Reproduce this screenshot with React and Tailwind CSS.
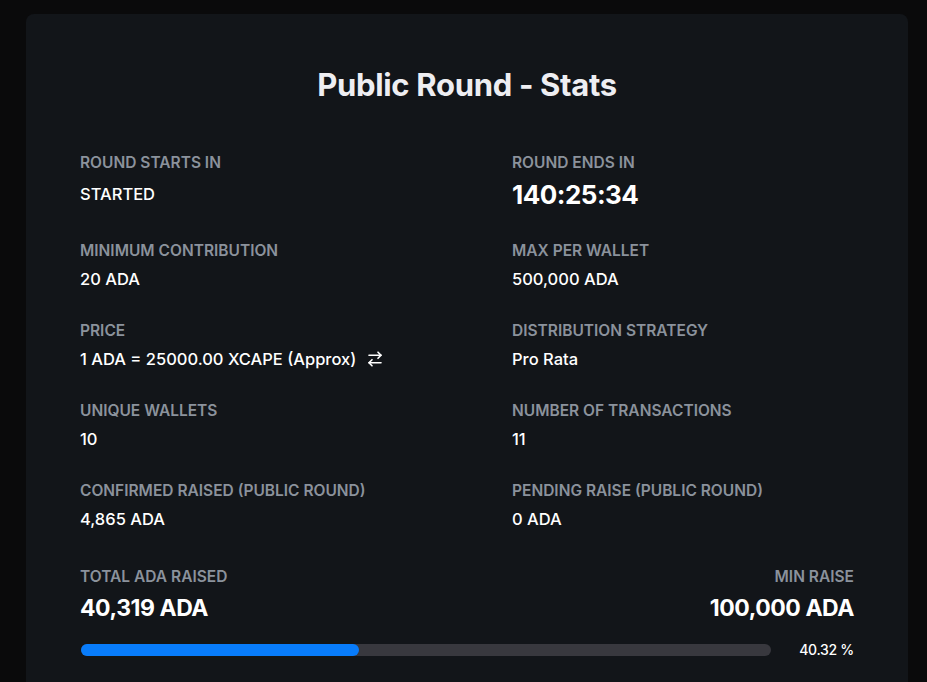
import React from 'react';
import { ArrowRightLeft } from 'lucide-react';

const Label = ({ children, className = '' }) => (
  <div className={`text-[15.5px] leading-5 font-semibold uppercase text-[#8b929c] ${className}`}>{children}</div>
);

const Value = ({ children, className = '' }) => (
  <div className={`mt-2 text-[16.5px] leading-5 font-medium text-white ${className}`}>{children}</div>
);

const rows = [
  ['MINIMUM CONTRIBUTION', '20 ADA', 'MAX PER WALLET', '500,000 ADA'],
  ['PRICE', 'price', 'DISTRIBUTION STRATEGY', 'Pro Rata'],
  ['UNIQUE WALLETS', '10', 'NUMBER OF TRANSACTIONS', '11'],
  ['CONFIRMED RAISED (PUBLIC ROUND)', '4,865 ADA', 'PENDING RAISE (PUBLIC ROUND)', '0 ADA'],
];

export default function App() {
  const pct = 40.32;
  return (
    <div className="min-h-[682px] bg-[#0a0a0b] pt-[14px] pl-[26px] pr-[19px]" style={{ fontFamily: 'Inter, "Liberation Sans", sans-serif' }}>
      <div className="min-h-[700px] rounded-lg bg-[#121519] px-[54px] pt-[53px]">
        <h1 className="text-center text-[31px] leading-9 font-bold tracking-[-0.01em] text-[#eeeef2]">
          Public Round - Stats
        </h1>

        <div className="mt-[50px] grid grid-cols-2 gap-x-[90px] gap-y-8">
          {/* first row: timer is bigger */}
          <div>
            <Label>ROUND STARTS IN</Label>
            <Value className="mt-[11px]">STARTED</Value>
          </div>
          <div>
            <Label>ROUND ENDS IN</Label>
            <div className="mt-2 text-[26px] leading-7 font-bold tracking-[-0.02em] text-white">140:25:34</div>
          </div>

          {rows.map(([l1, v1, l2, v2]) => (
            <React.Fragment key={l1}>
              <div>
                <Label>{l1}</Label>
                {v1 === 'price' ? (
                  <Value className="flex items-center gap-2.5">
                    1 ADA = 25000.00 XCAPE (Approx)
                    <ArrowRightLeft className="w-[18px] h-[18px] text-white" strokeWidth={2.2} />
                  </Value>
                ) : (
                  <Value>{v1}</Value>
                )}
              </div>
              <div>
                <Label>{l2}</Label>
                <Value>{v2}</Value>
              </div>
            </React.Fragment>
          ))}
        </div>

        {/* total raised */}
        <div className="mt-[38px] flex justify-between">
          <div>
            <Label>TOTAL ADA RAISED</Label>
            <div className="mt-1.5 text-[23px] leading-[30px] font-bold tracking-[-0.02em] text-white">40,319 ADA</div>
          </div>
          <div className="text-right">
            <Label>MIN RAISE</Label>
            <div className="mt-1.5 text-[23px] leading-[30px] font-bold tracking-[-0.02em] text-white">100,000 ADA</div>
          </div>
        </div>

        <div className="mt-[17px] flex items-center">
          <div className="h-3 flex-1 rounded-full bg-[#38383e] ml-px">
            <div className="h-3 rounded-full bg-[#087cfb]" style={{ width: `${pct}%` }} />
          </div>
          <div className="w-[83px] text-right text-[14px] leading-5 font-medium tracking-[-0.02em] text-white">40.32 %</div>
        </div>
      </div>
    </div>
  );
}
